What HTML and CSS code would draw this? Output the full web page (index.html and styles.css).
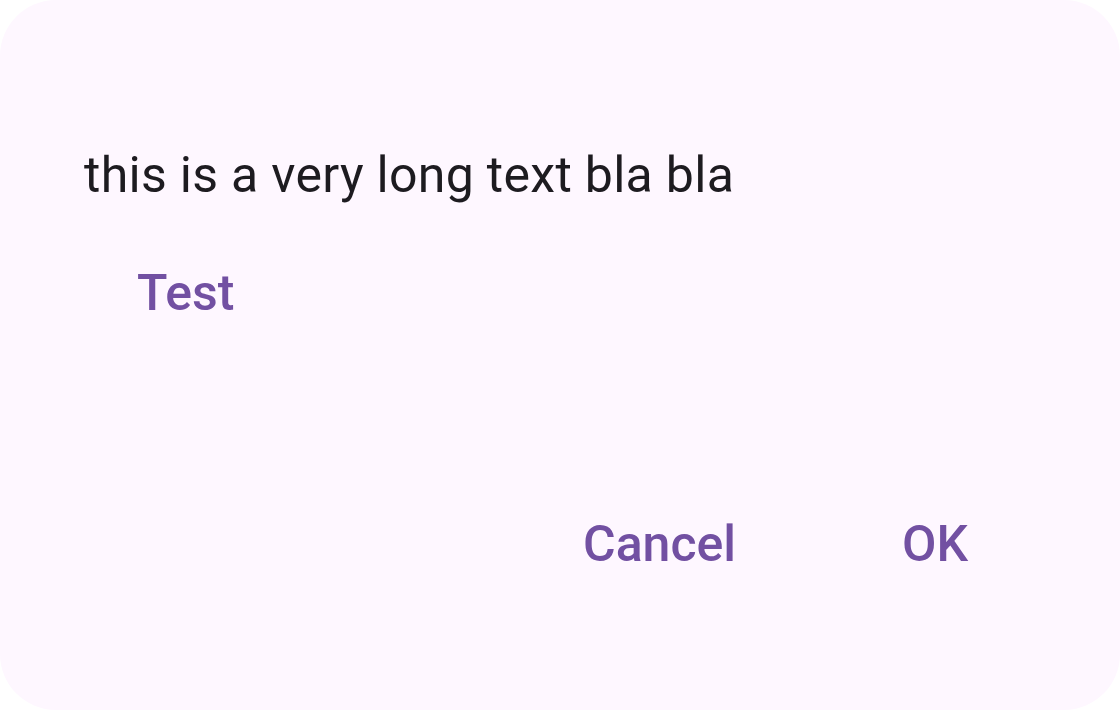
FILE: index.html
```html
<!DOCTYPE html>
<html>
<head>
<meta charset="utf-8">
<link rel="stylesheet" href="styles.css">
</head>
<body>
<div class="dialog">
  <p class="message">this is a very long text bla bla</p>
  <div class="inline-row">
    <button class="text-btn">Test</button>
  </div>
  <div class="actions">
    <button class="text-btn">Cancel</button>
    <button class="text-btn">OK</button>
  </div>
</div>
</body>
</html>
```
FILE: styles.css
```css
html, body {
  margin: 0;
  padding: 0;
  background: #ffffff;
}
body {
  width: 1120px;
  height: 710px;
  overflow: hidden;
  font-family: Roboto, "Liberation Sans", sans-serif;
}
.dialog {
  box-sizing: border-box;
  width: 1120px;
  height: 710px;
  background: #FEF7FF;
  border-radius: 56px;
  padding: 140px 0 0 84px;
  display: flex;
  flex-direction: column;
}
.message {
  margin: 0;
  font-size: 50px;
  line-height: 70px;
  color: #1D1B20;
  font-weight: 400;
  letter-spacing: 0.3px;
}
.inline-row {
  margin-top: 55px;
  padding-left: 53px;
  display: flex;
}
.text-btn {
  background: none;
  border: none;
  padding: 0;
  font-family: Roboto, "Liberation Sans", sans-serif;
  font-size: 50px;
  font-weight: 500;
  line-height: 56px;
  color: #7250A2;
  cursor: pointer;
}
.actions {
  margin-top: 195px;
  display: flex;
  padding-left: 499px;
  gap: 166px;
}
```
